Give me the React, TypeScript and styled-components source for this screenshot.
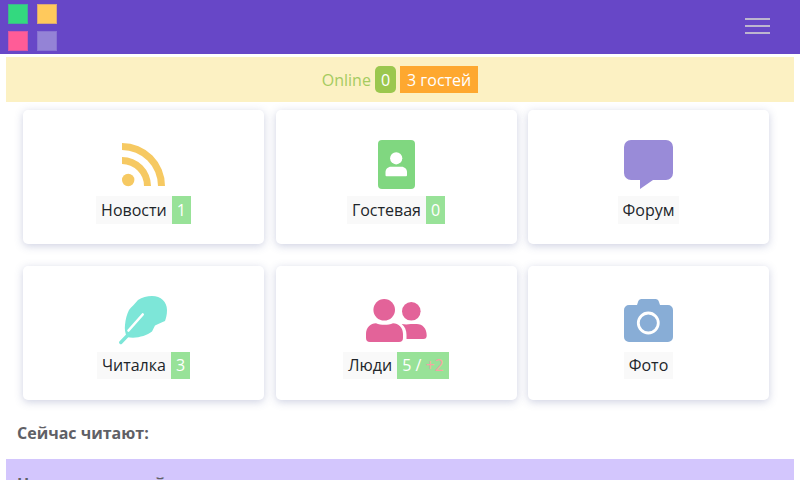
import React, { ReactNode } from 'react'
import styled, { createGlobalStyle } from 'styled-components'

const GlobalStyle = createGlobalStyle`
  html, body {
    margin: 0;
    padding: 0;
    height: 480px;
    overflow: hidden;
    background: #fff;
    font-family: "Open Sans", "Noto Sans", sans-serif;
  }
`

const Page = styled.div`
  width: 800px;
  height: 480px;
  overflow: hidden;
`

const Header = styled.header`
  height: 54px;
  background: #6747c7;
  display: flex;
  justify-content: space-between;
  align-items: center;
  padding: 0 30px 0 8px;
  box-sizing: border-box;
`

const LogoGrid = styled.div`
  display: grid;
  grid-template-columns: 20px 20px;
  grid-auto-rows: 20px;
  column-gap: 9px;
  row-gap: 7px;
  margin-top: 1px;
`

const LogoSquare = styled.span<{ $color: string }>`
  background: ${p => p.$color};
  box-shadow: inset 0 0 0 1px rgba(103, 71, 199, 0.25);
`

const Burger = styled.div`
  width: 25px;
  margin-bottom: 2px;
  display: flex;
  flex-direction: column;
  gap: 5px;
`

const BurgerLine = styled.span`
  height: 2px;
  background: #bdb5cf;
`

const OnlineBar = styled.div`
  margin: 3px 6px 0;
  height: 45px;
  background: #fcf1c3;
  display: flex;
  justify-content: center;
  align-items: center;
  font-size: 16px;
  color: #a5cb5f;
`

const OnlineCount = styled.span`
  margin-left: 4px;
  height: 27px;
  padding: 0 6px;
  display: flex;
  align-items: center;
  background: #9bc74e;
  color: #fff;
  border-radius: 5px;
`

const GuestCount = styled.span`
  margin-left: 4px;
  height: 27px;
  padding: 0 7px;
  display: flex;
  align-items: center;
  background: #fea82f;
  color: #fff;
`

const CardGrid = styled.div`
  display: grid;
  grid-template-columns: repeat(3, 241px);
  grid-auto-rows: 134px;
  column-gap: 11.5px;
  row-gap: 21.5px;
  padding: 8px 0 0 23px;
`

const Card = styled.div`
  background: #fff;
  border-radius: 5px;
  box-shadow: 0 2px 8px rgba(80, 90, 150, 0.28);
  display: flex;
  flex-direction: column;
  align-items: center;
`

const IconBox = styled.div`
  height: 49px;
  margin-top: 30px;
  display: flex;
  justify-content: center;
  align-items: center;
`

const Label = styled.div`
  margin-top: 7px;
  height: 27.5px;
  display: flex;
  font-size: 16px;
  color: #212529;
`

const LabelText = styled.span`
  padding: 0 5px;
  display: flex;
  align-items: center;
  background: #f9f9f9;
`

const Badge = styled.span`
  padding: 0 5px;
  display: flex;
  align-items: center;
  background: #98e298;
  color: #fff;
`

const PlusCount = styled.span`
  margin-left: 4px;
  color: #f5a3a3;
`

const ReadingTitle = styled.div`
  margin: 22.5px 0 0 17px;
  height: 22px;
  line-height: 22px;
  font-size: 16px;
  font-weight: 700;
  color: #5f6066;
`

const ReadingRow = styled.div`
  margin: 15px 6px 0;
  height: 60px;
  padding: 14px 11px 0;
  box-sizing: border-box;
  background: #d3c6fd;
  line-height: 22px;
  font-size: 16px;
  font-weight: 700;
  color: #5f6066;
`

const RssIcon = () => (
  <svg width="43" height="44" viewBox="0 0 43 44">
    <circle cx="6.2" cy="37" r="6.2" fill="#f6c962" />
    <path d="M0 14a29 29 0 0 1 29 29h-7A22 22 0 0 0 0 21z" fill="#f6c962" />
    <path d="M0 0a43 43 0 0 1 43 43h-7A36 36 0 0 0 0 7z" fill="#f6c962" />
  </svg>
)

const GuestIcon = () => (
  <svg width="37" height="49" viewBox="0 0 37 49">
    <rect width="37" height="49" rx="4" fill="#80d780" />
    <circle cx="18.2" cy="18.3" r="6.1" fill="#fff" />
    <path d="M7.500 32c0-3 2.500-5.300 5.500-5.300h10.500c3 0 5.500 2.300 5.500 5.300v3.300a1 1 0 0 1-1 1H8.500a1 1 0 0 1-1-1z" fill="#fff" />
  </svg>
)

const ForumIcon = () => (
  <svg width="49" height="49" viewBox="0 0 49 49">
    <path d="M7 0h35a7 7 0 0 1 7 7v26a7 7 0 0 1-7 7H29L16 49V40H7a7 7 0 0 1-7-7V7a7 7 0 0 1 7-7z" fill="#998bd8" />
  </svg>
)

const FeatherIcon = () => (
  <svg width="49" height="49" viewBox="0 0 49 49">
    <path d="M33 0C42 0 48 6 48 14C48 19 47 22 46 25L42.500 26.500L36 29.500L33 35.500C27 40 17 43 8 41C6 37 5.500 33 6 29C6.500 23 8 18 10 14C12 11 16 8 19 4C23 1.500 28 0 33 0Z" fill="#7de6d8" />
    <path d="M9.500 34.500L23.700 18.500" stroke="#fff" strokeWidth="2.600" strokeLinecap="round" />
    <path d="M1.800 46.500L9.500 38.500" stroke="#7de6d8" strokeWidth="3.400" strokeLinecap="round" />
  </svg>
)

const PeopleIcon = () => (
  <svg width="61" height="43" viewBox="0 0 61 43">
    <circle cx="18.200" cy="10.800" r="10.800" fill="#e36399" />
    <path d="M0 35c0-6.500 4.500-10.700 10-10.700 5 2 12 2 17 0 5.500 0 10 4.200 10 10.700v4a4 4 0 0 1-4 4H4a4 4 0 0 1-4-4z" fill="#e36399" />
    <circle cx="45.300" cy="12.300" r="9.300" fill="#e36399" />
    <path d="M35.700 25c3 .6 6 .6 9 0h6c6 0 10 4.500 10 11.500a3.500 3.500 0 0 1-3.500 3.500H40.500v-4c0-4.500-1.500-8.500-4.800-11z" fill="#e36399" />
  </svg>
)

const CameraIcon = () => (
  <svg width="49" height="43" viewBox="0 0 49 43">
    <path d="M5 6h8l1-3a4 4 0 0 1 4-3h13a4 4 0 0 1 4 3l1 3h8a5 5 0 0 1 5 5v27a5 5 0 0 1-5 5H5a5 5 0 0 1-5-5V11a5 5 0 0 1 5-5z" fill="#88add6" />
    <circle cx="24.300" cy="24" r="10" fill="none" stroke="#fff" strokeWidth="2.800" />
  </svg>
)

type Item = {
  title: string
  icon: ReactNode
  badge?: ReactNode
}

const items: Item[] = [
  { title: 'Новости', icon: <RssIcon />, badge: '1' },
  { title: 'Гостевая', icon: <GuestIcon />, badge: '0' },
  { title: 'Форум', icon: <ForumIcon /> },
  { title: 'Читалка', icon: <FeatherIcon />, badge: '3' },
  { title: 'Люди', icon: <PeopleIcon />, badge: <>5 /<PlusCount>+2</PlusCount></> },
  { title: 'Фото', icon: <CameraIcon /> },
]

function App() {
  return (
    <Page>
      <GlobalStyle />
      <Header>
        <LogoGrid>
          <LogoSquare $color="#33d97f" />
          <LogoSquare $color="#ffc95c" />
          <LogoSquare $color="#ff5c97" />
          <LogoSquare $color="#9483d6" />
        </LogoGrid>
        <Burger>
          <BurgerLine />
          <BurgerLine />
          <BurgerLine />
        </Burger>
      </Header>
      <OnlineBar>
        Online
        <OnlineCount>0</OnlineCount>
        <GuestCount>3 гостей</GuestCount>
      </OnlineBar>
      <CardGrid>
        {items.map(item => (
          <Card key={item.title}>
            <IconBox>{item.icon}</IconBox>
            <Label>
              <LabelText>{item.title}</LabelText>
              {item.badge && <Badge>{item.badge}</Badge>}
            </Label>
          </Card>
        ))}
      </CardGrid>
      <ReadingTitle>Сейчас читают:</ReadingTitle>
      <ReadingRow>Нет новых статей</ReadingRow>
    </Page>
  )
}

export default App
